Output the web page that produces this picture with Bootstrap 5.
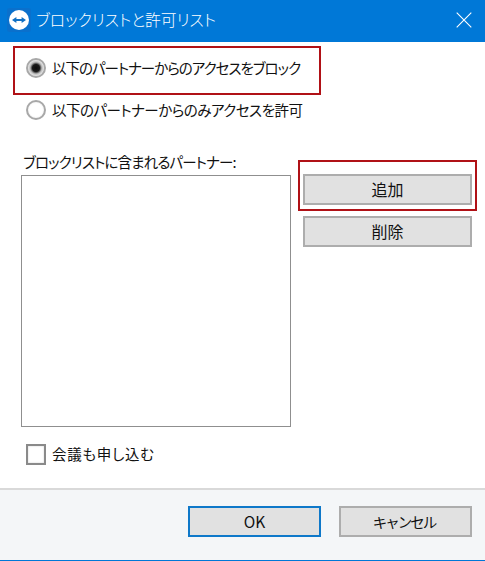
<!DOCTYPE html>
<html lang="ja">
<head>
<meta charset="utf-8">
<title>ブロックリストと許可リスト</title>
<link href="https://cdn.jsdelivr.net/npm/bootstrap@5.3.0/dist/css/bootstrap.min.css" rel="stylesheet">
<style>
html,body{height:561px;overflow:hidden}
body{font-family:"Noto Sans CJK JP","Liberation Sans",sans-serif;font-size:14.5px;line-height:20px;color:#111;background:#fff;font-feature-settings:"palt";white-space:nowrap}
.dlg{height:561px}
.titlebar{height:42px;background:#0078d7;color:#fff;font-size:15.8px;padding:0 13px 2px 7px}
.titlebar .ttl{margin-left:5px;font-weight:300}
.logo{width:24px;height:24px;flex:none}
.closex{width:16px;height:16px;flex:none}
.dlg-body{padding:4px 8px 0 0}
.redbox{border:2px solid #b01116}
.radio-red{margin-left:13px;width:308px;height:49px;padding:0 0 5px 11px}
.radio-plain{height:30px;margin:0 0 0 26px;padding-bottom:1px}
.radio-red span{letter-spacing:-1px}
.radio-plain span{letter-spacing:-.5px}
.opt{appearance:none;-webkit-appearance:none;width:20px;height:20px;margin:0 6px 0 0;flex:none;border-radius:50%;border:2px solid #a8a8a8;background:radial-gradient(circle,#fff 55%,#e4e4e4 100%)}
.opt:checked{background:radial-gradient(circle,#0c0c0c 0,#1a1a1a 32%,#bbb 52%,#efefef 72%,#dcdcdc 100%)}
.lists{margin-top:27px}
.leftcol{margin-left:21px;width:270px}
.listlabel{height:20px;margin-bottom:3px;padding-left:2px;letter-spacing:-.85px}
.listbox{height:252px;border:1px solid #8f8f8f;background:#fff}
.rightcol{margin:8px 0 0 7px;width:179px}
.redbtn{height:51px;padding:12px 3px 0}
.winbtn{display:block;height:31px;padding:0;border-radius:0;border:2px solid #adadad;background:#e1e1e1;color:#111;font-size:16px;line-height:27px;text-align:center}
.winbtn:hover{background:#e1e1e1;color:#111;border-color:#adadad}
.widebtn{width:169px}
.delbtn{margin:5px 0 0 5px}
.checkrow{margin:17px 0 0 26px;height:21px}
.checkrow span{letter-spacing:.7px;padding-bottom:2px}
.chk{appearance:none;-webkit-appearance:none;width:20px;height:21px;margin:0 6px 0 0;flex:none;border:2px solid #8a8a8a;background:#fff;box-shadow:inset 0 0 2px #cfcfcf}
.dlg-foot{height:73px;border-top:2px solid #d9d9d9;border-bottom:1px solid #0078d7;background:#f4f6f8;padding:16px 13px 0 0;margin-top:auto}
.footbtn{width:133px;font-size:15.5px}
.okbtn{border-color:#0e78c9;margin-right:18px}
.kana{font-size:14.5px;letter-spacing:-2px;padding-right:3px}
</style>
</head>
<body>
<div class="dlg d-flex flex-column">
  <div class="titlebar d-flex align-items-center">
    <svg class="logo" viewBox="0 0 24 24" aria-hidden="true">
      <rect width="24" height="24" rx="3" fill="#0a70cc"/>
      <circle cx="12" cy="12" r="10" fill="#fff"/>
      <path d="M5 12 9.4 8.9V10.9H14.6V8.9L19 12 14.6 15.1V13.1H9.4V15.1Z" fill="#1170c4"/>
    </svg>
    <span class="ttl flex-grow-1">ブロックリストと許可リスト</span>
    <svg class="closex" viewBox="0 0 16 16" aria-hidden="true"><path d="M.7.7 15.3 15.3M15.3.7.7 15.3" stroke="#fff" stroke-width="1.1" fill="none"/></svg>
  </div>
  <div class="dlg-body">
    <label class="redbox radio-red d-flex align-items-center">
      <input class="opt" type="radio" name="mode" checked>
      <span>以下のパートナーからのアクセスをブロック</span>
    </label>
    <label class="radio-plain d-flex align-items-center">
      <input class="opt" type="radio" name="mode">
      <span>以下のパートナーからのみアクセスを許可</span>
    </label>
    <div class="lists d-flex">
      <div class="leftcol">
        <div class="listlabel">ブロックリストに含まれるパートナー:</div>
        <div class="listbox"></div>
      </div>
      <div class="rightcol">
        <div class="redbox redbtn"><button type="button" class="btn winbtn w-100">追加</button></div>
        <button type="button" class="btn winbtn widebtn delbtn">削除</button>
      </div>
    </div>
    <label class="checkrow d-flex align-items-center">
      <input class="chk" type="checkbox">
      <span>会議も申し込む</span>
    </label>
  </div>
  <div class="dlg-foot d-flex justify-content-end align-items-start">
    <button type="button" class="btn winbtn footbtn okbtn">OK</button>
    <button type="button" class="btn winbtn footbtn kana">キャンセル</button>
  </div>
</div>
<script src="https://cdn.jsdelivr.net/npm/bootstrap@5.3.0/dist/js/bootstrap.bundle.min.js"></script>
</body>
</html>
